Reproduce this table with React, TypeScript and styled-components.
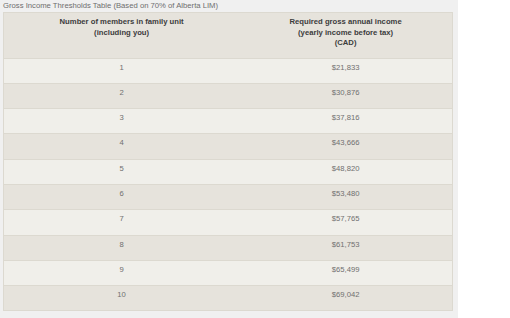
import styled, { createGlobalStyle } from 'styled-components'

const GlobalStyle = createGlobalStyle`
  html, body {
    margin: 0;
    padding: 0;
    background: #ffffff;
  }
  body {
    font-family: "Liberation Sans", Arial, sans-serif;
  }
`

const rows = [
    { members: '1', income: '$21,833' },
    { members: '2', income: '$30,876' },
    { members: '3', income: '$37,816' },
    { members: '4', income: '$43,666' },
    { members: '5', income: '$48,820' },
    { members: '6', income: '$53,480' },
    { members: '7', income: '$57,765' },
    { members: '8', income: '$61,753' },
    { members: '9', income: '$65,499' },
    { members: '10', income: '$69,042' },
]

const App = () => {
    return (
        <>
            <GlobalStyle />
            <Panel>
                <Caption>Gross Income Thresholds Table (Based on 70% of Alberta LIM)</Caption>
                <Table>
                    <colgroup>
                        <col style={{ width: '52.5%' }} />
                        <col />
                    </colgroup>
                    <thead>
                        <tr>
                            <HeadCell>
                                Number of members in family unit
                                <br />
                                (including you)
                            </HeadCell>
                            <HeadCell>
                                Required gross annual income
                                <br />
                                (yearly income before tax)
                                <br />
                                (CAD)
                            </HeadCell>
                        </tr>
                    </thead>
                    <tbody>
                        {rows.map((r, i) => (
                            <Row key={r.members} $odd={i % 2 === 0}>
                                <Cell>{r.members}</Cell>
                                <Cell>{r.income}</Cell>
                            </Row>
                        ))}
                    </tbody>
                </Table>
            </Panel>
        </>
    )
}

const Panel = styled.div`
    width: 458px;
    height: 318px;
    box-sizing: border-box;
    padding: 0 0 0 3px;
    background: #f0f0f0;
`

const Caption = styled.div`
    height: 12px;
    font-size: 7.7px;
    line-height: 11px;
    color: #6e6e6e;
    white-space: nowrap;
`

const Table = styled.table`
    width: 450px;
    border-collapse: collapse;
    table-layout: fixed;
    border: 1px solid #dcd9d0;
    font-size: 7.68px;
`

const HeadCell = styled.th`
    height: 45px;
    box-sizing: border-box;
    padding: 4px 4px 9px;
    vertical-align: top;
    text-align: center;
    font-weight: bold;
    line-height: 10.5px;
    color: #3c3c3c;
    background: #e6e3dc;
`

const Row = styled.tr<{ $odd: boolean }>`
    background: ${p => (p.$odd ? '#f0efea' : '#e6e3dc')};
    border-top: 1px solid #dcd9d0;
`

const Cell = styled.td`
    height: 25.3px;
    box-sizing: border-box;
    padding: 4px 4px 0;
    vertical-align: top;
    text-align: center;
    line-height: 10.5px;
    color: #707070;
`

export default App
